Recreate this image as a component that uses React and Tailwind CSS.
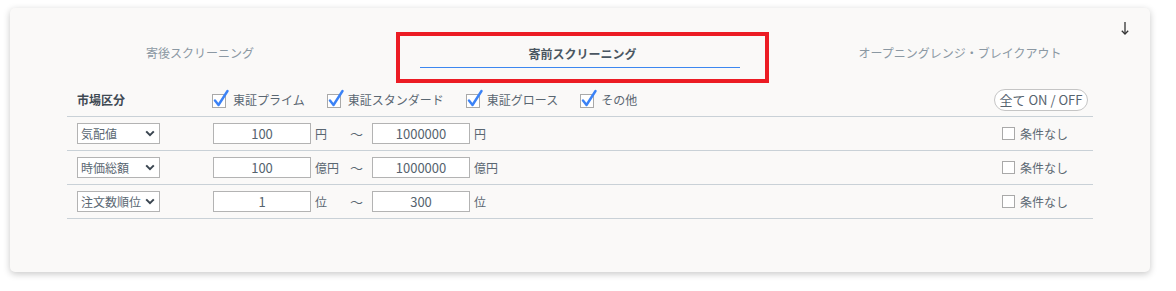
import React from 'react'

const font = { fontFamily: '"Noto Sans CJK JP", "Noto Sans", sans-serif' }

function CheckMark() {
  return (
    <svg width="17" height="20" viewBox="0 0 17 20" className="shrink-0 -mt-[4px]">
      <rect x="0.5" y="6.5" width="13" height="13" fill="#fff" stroke="#a9a9a9" />
      <path d="M3 12.5 L6.5 17 L15.5 3" fill="none" stroke="#3b82f6" strokeWidth="2.4" strokeLinecap="round" strokeLinejoin="round" />
    </svg>
  )
}

function Market({ label }) {
  return (
    <label className="flex items-center gap-[4px]">
      <CheckMark />
      <span>{label}</span>
    </label>
  )
}

function Select({ label }) {
  return (
    <div className="flex items-center justify-between w-[83px] h-[21px] border border-[#b3b3b3] bg-white pl-[3px] pr-[4px]">
      <span className="whitespace-nowrap">{label}</span>
      <svg width="10" height="7" viewBox="0 0 10 7" className="shrink-0">
        <path d="M1.2 1.4 L5 5.2 L8.8 1.4" fill="none" stroke="#3a4550" strokeWidth="2" />
      </svg>
    </div>
  )
}

function NumBox({ value }) {
  return (
    <div className="w-[98px] h-[21px] border border-[#b3b3b3] bg-white flex items-center justify-center text-[13px] text-[#56636e]">
      {value}
    </div>
  )
}

function RangeRow({ label, from, to, unit }) {
  return (
    <div className="flex items-center h-[34px] border-b border-[#c9d1d7]">
      <div className="w-[146px] pl-[10px]">
        <Select label={label} />
      </div>
      <NumBox value={from} />
      <span className="w-[39px] pl-[4px]">{unit}</span>
      <span className="w-[22px] text-[13px]">〜</span>
      <NumBox value={to} />
      <span className="pl-[4px]">{unit}</span>
      <label className="ml-auto mr-[25px] flex items-center gap-[5px]">
        <span className="w-[13px] h-[13px] border border-[#a9a9a9] bg-white" />
        <span>条件なし</span>
      </label>
    </div>
  )
}

export default function App() {
  return (
    <div className="w-[1176px] h-[291px] bg-white pt-[8px] pl-[10px]" style={font}>
      <div className="w-[1140px] h-[264px] bg-[#faf9f8] rounded-[5px] shadow-[0_2px_7px_rgba(0,0,0,0.22)] text-[12px] text-[#5a6772]">
        <div className="h-[24px] flex justify-end pr-[21px] pt-[14px]">
          <svg width="8" height="13" viewBox="0 0 8 13">
            <path d="M4 0 V11.5" stroke="#333333" strokeWidth="1.3" />
            <path d="M0.8 8.8 L4 12 L7.2 8.8" fill="none" stroke="#333333" strokeWidth="1.3" />
          </svg>
        </div>
        <div className="grid grid-cols-3 h-[51px]">
          <div className="flex justify-center pt-[12px] text-[#8b98a3]">寄後スクリーニング</div>
          <div className="flex">
            <div className="ml-[6px] w-[373px] h-[51px] border-[4px] border-[#ec1c24] flex flex-col">
              <div className="text-center font-bold text-[#4a5661] pt-[9px] leading-[18px]">寄前スクリーニング</div>
              <div className="mt-[4px] ml-[20px] w-[320px] h-[1px] bg-[#3c87f0]" />
            </div>
          </div>
          <div className="flex justify-center pt-[12px] text-[#8b98a3]">オープニングレンジ・ブレイクアウト</div>
        </div>
        <div className="mx-[57px]">
          <div className="flex items-center h-[34px] border-b border-[#c9d1d7]">
            <div className="w-[145px] pl-[10px] font-bold text-[#3f4a54]">市場区分</div>
            <div className="flex items-center gap-[22px]">
              <Market label="東証プライム" />
              <Market label="東証スタンダード" />
              <Market label="東証グロース" />
              <Market label="その他" />
            </div>
            <button className="ml-auto mr-[5px] h-[22px] w-[94px] rounded-full border border-[#c5c5c5] bg-white text-[13px] text-[#56636e]">
              全て ON / OFF
            </button>
          </div>
          <RangeRow label="気配値" from="100" to="1000000" unit="円" />
          <RangeRow label="時価総額" from="100" to="1000000" unit="億円" />
          <RangeRow label="注文数順位" from="1" to="300" unit="位" />
        </div>
      </div>
    </div>
  )
}
